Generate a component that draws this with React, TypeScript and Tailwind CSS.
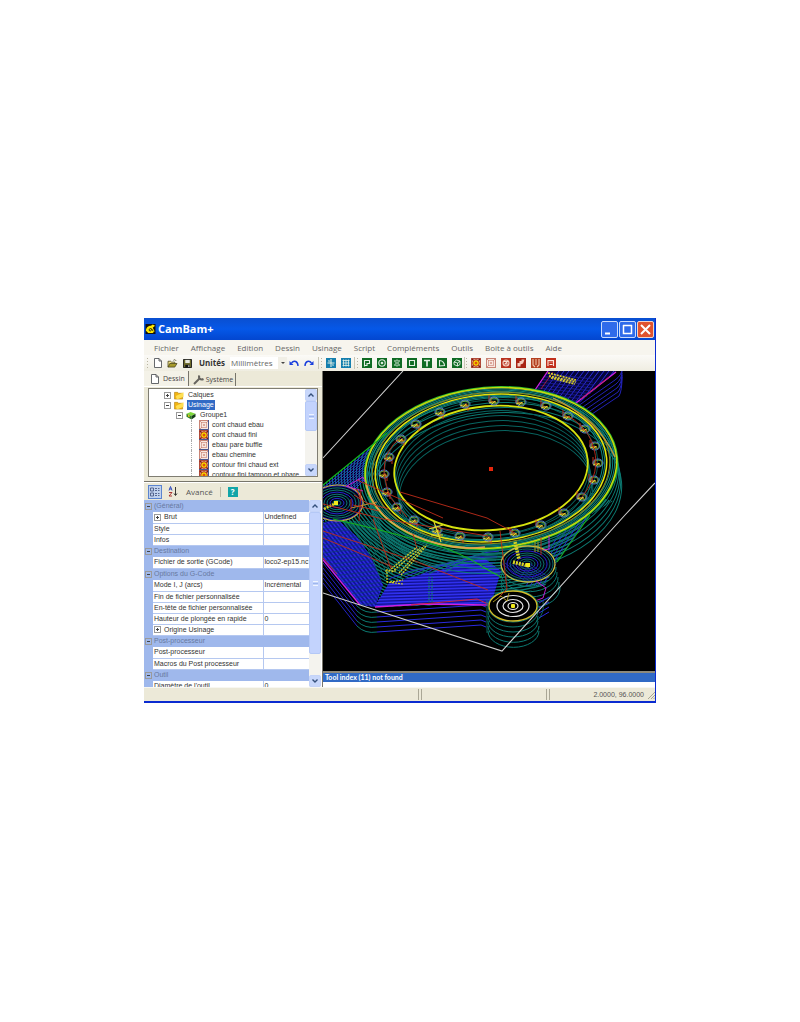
import { useState, type ReactNode } from 'react';

const menus = ['Fichier', 'Affichage', 'Edition', 'Dessin', 'Usinage', 'Script', 'Compléments', 'Outils', 'Boite à outils', 'Aide'];

const operations = [
  { label: 'cont chaud ebau', kind: 'pocket' },
  { label: 'cont chaud fini', kind: 'profile' },
  { label: 'ebau pare buffle', kind: 'pocket' },
  { label: 'ebau chemine', kind: 'pocket' },
  { label: 'contour fini chaud ext', kind: 'profile' },
  { label: 'contour fini tampon et phare', kind: 'profile' },
];

const sections = [
  {
    title: '(Général)',
    rows: [
      { name: 'Brut', value: 'Undefined', expandable: true },
      { name: 'Style', value: '' },
      { name: 'Infos', value: '' },
    ],
  },
  { title: 'Destination', rows: [{ name: 'Fichier de sortie (GCode)', value: 'loco2-ep15.nc' }] },
  {
    title: 'Options du G-Code',
    rows: [
      { name: 'Mode I, J (arcs)', value: 'Incrémental' },
      { name: 'Fin de fichier personnalisée', value: '' },
      { name: 'En-tête de fichier personnalisée', value: '' },
      { name: 'Hauteur de plongée en rapide', value: '0' },
      { name: 'Origine Usinage', value: '', expandable: true },
    ],
  },
  {
    title: 'Post-processeur',
    rows: [
      { name: 'Post-processeur', value: '' },
      { name: 'Macros du Post processeur', value: '' },
    ],
  },
  { title: 'Outil', rows: [{ name: "Diamètre de l'outil", value: '0' }] },
] as { title: string; rows: { name: string; value: string; expandable?: boolean }[] }[];

function ToolIcon({ label, color, children }: { label: string; color: string; children: ReactNode }) {
  return (
    <button aria-label={label} className="size-[10px] shrink-0">
      <svg viewBox="0 0 10 10" className="block size-full" fill="none" stroke="#e4f0e4" strokeWidth="1.1">
        <rect width="10" height="10" fill={color} stroke="none" />
        {children}
      </svg>
    </button>
  );
}

const drawTools = [
  { label: 'Polyligne', icon: <path d="M2.500 8.500V2.500H7.500V5.500H5V7.500H2.500" /> },
  { label: 'Cercle', icon: <><circle cx="5" cy="5" r="3.200" /><circle cx="5" cy="5" r=".8" /></> },
  { label: 'Points', icon: <path d="M2 3h2M6 3h2M3 5h4M2 7h2M6 7h2M5 1.500v2M5 6.500v2" /> },
  { label: 'Rectangle', icon: <path d="M2.500 2.500h5v5h-5z" /> },
  { label: 'Texte', icon: <path d="M2 2.500h6M5 2.500v6" strokeWidth="1.700" /> },
  { label: 'Arc', icon: <path d="M2.500 8V2.500C5.500 2.500 7.500 5 7.500 7.500z" /> },
  { label: 'Surface', icon: <path d="M2 4l2.500-2L8 3v3.500L5.500 8 2 6.500zM2 4l3.500 1L8 3M5.500 5v3" strokeWidth=".9" /> },
];

function TargetArt() {
  return (
    <>
      <rect x=".5" y=".5" width="9" height="9" fill="#e8c0ac" stroke="#b04a38" strokeWidth="1" />
      <path d="M1 1l2 2M9 1L7 3M1 9l2-2M9 9L7 7" stroke="#7b1610" strokeWidth="1.500" />
      <circle cx="5" cy="5" r="3.300" fill="#f6e000" stroke="#b3281b" strokeWidth="1" />
      <circle cx="5" cy="5" r="1.500" fill="#e0500c" />
    </>
  );
}

function PocketArt() {
  return (
    <>
      <rect x=".5" y=".5" width="9" height="9" fill="#f8e6de" stroke="#c98475" strokeWidth="1" />
      <rect x="2.500" y="2.500" width="5" height="5" fill="none" stroke="#dba99c" strokeWidth="1" />
      <path d="M4.500 4.500h1v1h-1zM1 1l2 2M9 1L7 3M1 9l2-2" fill="none" stroke="#c98373" strokeWidth=".8" />
    </>
  );
}

const camTools = [
  { label: 'Contour', color: '#b42a1a', icon: <g stroke="none"><TargetArt /></g> },
  { label: 'Poche', color: '#e3b6aa', icon: <g stroke="none"><PocketArt /></g> },
  { label: 'Perçage', color: '#b8321f', icon: <><circle cx="5" cy="5" r="3" stroke="#f3d0c2" /><path d="M3 3.500h3.500L4 6h3" stroke="#f6dccf" /></> },
  { label: 'Gravure', color: '#a82413', icon: <path d="M1.500 8.500V5h2V3h2V1.500h3L7 5.500 4.500 6.500v2z" fill="#f6cdbd" stroke="none" /> },
  { label: 'Tournage', color: '#b4401f', icon: <path d="M2 1v6l2 2M8 1v6L6 9M4 2h2M4 4h2M4 6h2" stroke="#f3c9b0" /> },
  { label: 'Profil 3D', color: '#c1301c', icon: <path d="M2 8V2.500h5.500V8M3.500 4h1M5.500 4h1M3.500 6.500h3" stroke="#ffe7dd" /> },
];

function Grip() {
  return (
    <svg viewBox="0 0 2 10" className="h-[10px] w-[2px] shrink-0" fill="#b9b5a2">
      <path d="M0 0h1v1H0zM0 3h1v1H0zM0 6h1v1H0zM0 9h1v1H0z" />
    </svg>
  );
}

function DocIcon() {
  return (
    <svg viewBox="0 0 8 10" className="h-[10px] w-[8px] shrink-0" fill="#fff" stroke="#55585c" strokeWidth=".9">
      <path d="M.5 .5h4.500l2.500 2.500v6.500H.5zM5 .5V3h2.500" />
    </svg>
  );
}

function FolderIcon() {
  return (
    <svg viewBox="0 0 11 10" className="h-[9px] w-[10px] shrink-0">
      <path d="M.5 1.500h3.500l1 1h4.500v6.500h-9z" fill="#f2b412" stroke="#a9780a" strokeWidth=".6" />
      <path d="M2 5.500L10.500 1.500v5L3 9.500z" fill="#ffdf52" />
    </svg>
  );
}

function CubeIcon() {
  return (
    <svg viewBox="0 0 11 10" className="h-[9px] w-[10px] shrink-0">
      <path d="M.5 3L5 1l5.500 2L6 5.500z" fill="#7ed93a" />
      <path d="M.5 3L6 5.500V9.500L.5 6.500z" fill="#2a7d1f" />
      <path d="M6 5.500L10.500 3v3.500L6 9.500z" fill="#143f14" />
      <path d="M2 4l2 1v2L2 6z" fill="#e7c51f" />
    </svg>
  );
}

function Toggle({ open }: { open?: boolean }) {
  return (
    <svg viewBox="0 0 7 7" className="size-[7px] shrink-0" fill="none" stroke="#9a9a9a" strokeWidth="1">
      <rect x=".5" y=".5" width="6" height="6" />
      <path d={open ? 'M2 3.500h3' : 'M2 3.500h3M3.500 2v3'} stroke="#444" />
    </svg>
  );
}

function Scrollbar({ thumb }: { thumb: string }) {
  return (
    <div className="flex w-[12px] shrink-0 flex-col bg-[#f4f3ee]">
      <button aria-label="Défiler vers le haut" className="flex h-[12px] items-center justify-center rounded-[2px] border border-[#c4d3f8] bg-[#c8d7fb]">
        <svg viewBox="0 0 6 4" className="h-[4px] w-[6px]" fill="none" stroke="#35507c" strokeWidth="1.400"><path d="M.5 3.500L3 1l2.500 2.500" /></svg>
      </button>
      <div className="flex min-h-0 flex-1 flex-col">
        <div className={`flex flex-col items-center justify-center gap-px rounded-[2px] border border-[#b4c8f6] bg-[#c3d3fd] ${thumb}`}>
          <i className="h-px w-[5px] bg-[#eef4fe]" />
          <i className="h-px w-[5px] bg-[#9fb8ec]" />
          <i className="h-px w-[5px] bg-[#eef4fe]" />
        </div>
      </div>
      <button aria-label="Défiler vers le bas" className="flex h-[12px] items-center justify-center rounded-[2px] border border-[#c4d3f8] bg-[#c8d7fb]">
        <svg viewBox="0 0 6 4" className="h-[4px] w-[6px]" fill="none" stroke="#35507c" strokeWidth="1.400"><path d="M.5 .5L3 3 5.500 .5" /></svg>
      </button>
    </div>
  );
}

function TitleBar() {
  return (
    <header className="flex h-[22px] items-center gap-[2px] bg-linear-to-b from-[#0a4fd0] via-[#0558e8] to-[#0346cf] px-px">
      <svg viewBox="0 0 11 11" className="h-[10px] w-[11px]">
        <rect width="11" height="11" fill="#111" />
        <path d="M.5 7.500C.5 4 3 2 6 2l2-1.500L10.500 2 8 4l2 4-2 2H3z" fill="#ffea00" />
        <path d="M4 6.500c0-2 3-2 2.500 0S4 8 4 6.500M6.500 5l2 3" fill="none" stroke="#111" strokeWidth=".9" />
      </svg>
      <h1 className="flex-1 font-['Open_Sans',sans-serif] text-[11px] leading-[20px] font-bold text-white">CamBam+</h1>
      <div className="flex gap-[1px]">
        <button aria-label="Réduire" className="size-[17px] rounded-[2px] border border-[#c9dafb] bg-[#2f6bea]">
          <svg viewBox="0 0 15 15"><path d="M3 11.500h5" stroke="#fff" strokeWidth="2" /></svg>
        </button>
        <button aria-label="Agrandir" className="size-[17px] rounded-[2px] border border-[#c9dafb] bg-[#2f6bea]">
          <svg viewBox="0 0 15 15"><path d="M3 3.500h9M3.500 3v8.500h8V3" fill="none" stroke="#fff" strokeWidth="1.500" /></svg>
        </button>
        <button aria-label="Fermer" className="size-[17px] rounded-[2px] border border-[#f3d3ca] bg-[#e0532f]">
          <svg viewBox="0 0 15 15"><path d="M3 3l9 9M12 3l-9 9" stroke="#fff" strokeWidth="2" /></svg>
        </button>
      </div>
    </header>
  );
}

function Toolbar() {
  return (
    <div className="flex h-[16px] items-center bg-linear-to-b from-[#fbfaf7] to-[#efede1] pl-[3px]">
      <Grip />
      <div className="ml-[5px] flex items-center gap-[5px]">
        <button aria-label="Nouveau"><DocIcon /></button>
        <button aria-label="Ouvrir">
          <svg viewBox="0 0 11 10" className="h-[9px] w-[11px]" stroke="#3e3a12" strokeWidth=".8">
            <path d="M.5 9V2.500h3l1 1h3.500V5" fill="#f1e08a" />
            <path d="M.5 9l2-4h8L8 9z" fill="#a69a2c" />
            <path d="M6.500 1.500c1-1 2-1 3 .5" fill="none" />
          </svg>
        </button>
        <button aria-label="Enregistrer">
          <svg viewBox="0 0 10 10" className="size-[9px]">
            <path d="M.5 .5h9v9h-9z" fill="#6d6a2b" stroke="#151515" />
            <path d="M2.500 1h5v3.500h-5z" fill="#e9e9e0" />
            <path d="M2.500 6.500h5v3h-5z" fill="#151515" />
            <path d="M6 7h1v2H6z" fill="#fff" />
          </svg>
        </button>
      </div>
      <label htmlFor="units" className="ml-[7px] w-[28px] font-['Open_Sans',sans-serif] text-[8px] leading-[10px] font-bold text-[#333]">Unités</label>
      <div className="ml-[3px] flex w-[57px] items-center bg-white">
        <select id="units" className="h-[12px] w-full min-w-0 appearance-none bg-transparent pl-px font-['Open_Sans',sans-serif] text-[8px] leading-[10px] text-[#666]">
          <option>Millimètres</option>
        </select>
        <span className="flex h-[12px] w-[9px] shrink-0 items-center justify-center bg-[#f1efe6]">
          <svg viewBox="0 0 4 2" className="h-[2px] w-[4px]"><path d="M0 0h4L2 2z" fill="#444" /></svg>
        </span>
      </div>
      <div className="ml-[2px] flex gap-[5px]">
        <button aria-label="Annuler">
          <svg viewBox="0 0 10 10" className="size-[10px]" fill="none" stroke="#1a3fdc" strokeWidth="1.400">
            <path d="M9 8C9 3.500 5 1.500 2.500 5" /><path d="M.5 3v4h4z" fill="#1a3fdc" stroke="none" />
          </svg>
        </button>
        <button aria-label="Rétablir">
          <svg viewBox="0 0 10 10" className="size-[10px]" fill="none" stroke="#1a3fdc" strokeWidth="1.400">
            <path d="M1 8C1 3.500 5 1.500 7.500 5" /><path d="M9.500 3v4h-4z" fill="#1a3fdc" stroke="none" />
          </svg>
        </button>
      </div>
      <i className="mr-[2px] ml-[4px] h-[12px] w-px bg-[#c9c6b6]" />
      <Grip />
      <div className="ml-[3px] flex gap-[5px]">
        <ToolIcon label="Aimanter à la grille" color="#157fae"><path d="M5 1v8M1.500 5h7M2.500 2.500l1 1M6.500 6.500l1 1" /></ToolIcon>
        <ToolIcon label="Afficher la grille" color="#157fae"><path d="M1.500 2.500h7M1.500 5h7M1.500 7.500h7M2.500 1.500v7M5 1.500v7M7.500 1.500v7" strokeWidth=".8" /></ToolIcon>
      </div>
      <i className="mr-[2px] ml-[3px] h-[12px] w-px bg-[#c9c6b6]" />
      <Grip />
      <div className="ml-[3px] flex gap-[5px]">
        {drawTools.map((tool) => (
          <ToolIcon key={tool.label} label={tool.label} color="#0f6b23">{tool.icon}</ToolIcon>
        ))}
      </div>
      <i className="mr-px ml-[2px] h-[12px] w-px bg-[#c9c6b6]" />
      <Grip />
      <div className="ml-[3px] flex gap-[5px]">
        {camTools.map((tool) => (
          <ToolIcon key={tool.label} label={tool.label} color={tool.color}>{tool.icon}</ToolIcon>
        ))}
      </div>
    </div>
  );
}

function TreePanel() {
  const [selected, setSelected] = useState('Usinage');
  const name = (label: string) => (
    <button
      onClick={() => setSelected(label)}
      className={`h-[10px] px-px whitespace-nowrap ${selected === label ? 'bg-[#316ac5] text-white' : ''}`}
    >
      {label}
    </button>
  );

  return (
    <div className="mx-[4px] flex h-[89px] border border-[#7f7d72] bg-white">
      <ul className="min-w-0 flex-1 overflow-hidden pt-px text-[7px] leading-[10px] text-[#333]">
        <li className="flex h-[10px] items-center gap-[3px] pl-[15px]"><Toggle /><FolderIcon />{name('Calques')}</li>
        <li className="flex h-[10px] items-center gap-[3px] pl-[15px]"><Toggle open /><FolderIcon />{name('Usinage')}</li>
        <li className="flex h-[10px] items-center gap-[3px] pl-[27px]"><Toggle open /><CubeIcon />{name('Groupe1')}</li>
        {operations.map((op) => (
          <li key={op.label} className="flex h-[10px] items-center gap-[2px] pl-[42px]">
            <i className="h-full w-[6px] shrink-0 border-l border-dotted border-[#aaa]" />
            <svg viewBox="0 0 10 10" className="size-[10px] shrink-0">
              {op.kind === 'profile' ? <TargetArt /> : <PocketArt />}
              <path d="M9.500 0v9.500H0" fill="none" stroke="#4a568c" strokeWidth="1" />
            </svg>
            {name(op.label)}
          </li>
        ))}
      </ul>
      <Scrollbar thumb="h-[30px]" />
    </div>
  );
}

function PropertyGrid() {
  return (
    <div className="flex h-[187px] min-h-0 bg-white pr-px">
      <div className="min-w-0 flex-1 overflow-hidden">
        <table className="w-full table-fixed border-collapse text-[7px] leading-[10px] text-[#333]">
          <colgroup>
            <col className="w-[9px]" />
            <col className="w-[110px]" />
            <col />
          </colgroup>
          {sections.map((section) => (
            <tbody key={section.title}>
              <tr className="h-[12px] bg-[#9fb8ec] text-[#68799f]">
                <td className="p-0 pl-px"><Toggle open /></td>
                <th colSpan={2} className="p-0 pl-px text-left font-normal">{section.title}</th>
              </tr>
              {section.rows.map((row) => (
                <tr key={row.name} className="h-[11px]">
                  <td className="bg-[#9fb8ec] p-0" />
                  <th className="border-r border-b border-[#b5c8f0] p-0 text-left font-normal">
                    <span className="flex h-[10px] items-center gap-[3px] overflow-hidden pl-px whitespace-nowrap">
                      {row.expandable && <Toggle />}
                      {row.name}
                    </span>
                  </th>
                  <td className="overflow-hidden border-b border-[#b5c8f0] p-0 pl-px whitespace-nowrap">{row.value}</td>
                </tr>
              ))}
            </tbody>
          ))}
        </table>
      </div>
      <Scrollbar thumb="h-[142px]" />
    </div>
  );
}

function Sidebar() {
  return (
    <aside className="flex w-[178px] shrink-0 flex-col bg-[#ece9d8]">
      <div role="tablist" className="flex h-[15px] items-end font-['Open_Sans',sans-serif] text-[7px] leading-[10px] text-[#444]">
        <button role="tab" aria-selected="true" className="flex h-[15px] items-center gap-[4px] border-r border-[#77756b] bg-[#f4f2e8] pr-[3px] pl-[7px]">
          <DocIcon />Dessin
        </button>
        <button role="tab" aria-selected="false" className="flex h-[13px] items-center gap-[2px] border-r border-[#77756b] pr-[2px] pl-[4px]">
          <svg viewBox="0 0 11 10" className="h-[10px] w-[11px]" fill="none" stroke="#66645f" strokeWidth="2">
            <path d="M1 9l5.500-5.500" /><path d="M6.500 .5C5 3 7.500 5.500 10.500 4" />
          </svg>
          Système
        </button>
      </div>
      <div className="border-y border-t-[#fff] border-b-[#77756b] pt-px pb-[4px]">
        <TreePanel />
      </div>
      <div className="flex h-[18px] items-center border-t border-white pl-[4px] font-['Open_Sans',sans-serif] text-[8px] leading-[10px] text-[#555]">
        <button aria-label="Par catégorie" className="flex size-[14px] items-center justify-center border border-[#5b84cf] bg-[#c1d2ee]">
          <svg viewBox="0 0 10 10" className="size-[10px]" fill="none" stroke="#3d4d78" strokeWidth=".8">
            <path d="M.5 1h3v3h-3zM.5 6h3v3h-3zM5 1.500h2M8 1.500h1.500M5 3.500h2M8 3.500h1.500M5 6.500h2M8 6.500h1.500M5 8.500h2M8 8.500h1.500" />
          </svg>
        </button>
        <button aria-label="Par ordre alphabétique" className="ml-[6px]">
          <svg viewBox="0 0 10 11" className="h-[11px] w-[10px]" fill="none" strokeWidth=".9">
            <path d="M1 4.500L2.500 .5 4 4.500M1.500 3h2" stroke="#2340bd" />
            <path d="M1 6.500h3L1 10h3" stroke="#a32323" />
            <path d="M7.500 1v8M6 7.500L7.500 9.500 9 7.500" stroke="#222" />
          </svg>
        </button>
        <button className="ml-[8px]">Avancé</button>
        <i className="mx-[7px] h-[10px] w-px bg-[#bdb9a6]" />
        <button aria-label="Aide" className="flex size-[10px] items-center justify-center bg-[#12a5a8] text-[8px] font-bold text-white">?</button>
      </div>
      <PropertyGrid />
    </aside>
  );
}

const TEAL = '#0c7a72';
const BLUE = '#2a2ae0';
const LEVELS = [1, 2, 3, 4, 5];

const holes = [
  [171, 30], [198, 31], [223, 35], [245, 45], [262, 58], [272, 75], [275, 92], [271, 109],
  [259, 126], [241, 142], [218, 154], [192, 162], [165, 166], [137, 165], [114, 159], [91, 149],
  [74, 136], [64, 121], [61, 103], [66, 86], [78, 68], [93, 53], [117, 41], [142, 33],
];

function range(n: number) {
  return Array.from({ length: n }, (_, i) => i);
}

function Ring({ rx, ry, color, width = 1, level = 0 }: { rx: number; ry: number; color: string; width?: number; level?: number }) {
  return (
    <ellipse
      cx="0" cy="0" rx={rx} ry={ry} fill="none" stroke={color} strokeWidth={width}
      transform={`translate(${168 + level} ${97 + level * 5}) rotate(-5)`}
    />
  );
}

function Viewport() {
  return (
    <svg viewBox="0 0 332 300" preserveAspectRatio="xMidYMid slice" className="block h-[300px] w-full bg-black" fill="none" role="img" aria-label="Parcours d'outil">
      <defs>
        <clipPath id="plate">
          <path d="M0 114L64 62 168 97 290 130 267 144 234 191 222 215 200 222 175 222 165 233 52 236 37 234 0 189z" />
        </clipPath>
        <clipPath id="blueLeft">
          <path d="M0 152L14 148 34 166 48 186 60 214 52 236 37 234 0 189z" />
        </clipPath>
        <clipPath id="blueRight">
          <path d="M52 235L66 212 104 202 128 196 160 186 178 200 168 233z" />
        </clipPath>
        <clipPath id="boss">
          <path d="M225 0H294L254 34 212 19z" />
        </clipPath>
        <clipPath id="hubInner"><ellipse cx="205" cy="193" rx="27" ry="18" /></clipPath>
      </defs>

      {/* plate: contours that follow the ring outwards */}
      <g clipPath="url(#plate)">
        {range(26).map((i) => (
          <Ring key={i} rx={129 + i * 3} ry={83 + i * 3} color={TEAL} width={1.3} />
        ))}
        {range(12).map((i) => (
          <path key={i} d={`M0 ${117 + i * 3}L${62 - i} ${66 + i * 3}`} stroke={BLUE} />
        ))}
        {range(16).map((i) => (
          <path key={i} d={`M${18 + i * 2} 150Q${40 + i * 2} ${160 + i} ${54 + i * 4} ${212 - i * 2}`} stroke={TEAL} strokeWidth=".8" />
        ))}
        {range(9).map((i) => (
          <path key={i} d={`M${203 + i * 4} 215L${250 + i * 4} 142`} stroke={BLUE} strokeWidth=".9" />
        ))}
      </g>
      <g clipPath="url(#blueLeft)">
        <path d="M0 140H70V240H0z" fill="#121296" />
        {range(34).map((i) => (
          <path key={i} d={`M${-60 + i * 4} 140L${20 + i * 4} 240`} stroke={BLUE} strokeWidth="1.500" />
        ))}
        {range(24).map((i) => (
          <path key={i} d={`M0 ${150 + i * 4}L70 ${142 + i * 4}`} stroke="#0d3f70" strokeWidth=".7" />
        ))}
      </g>
      <g clipPath="url(#blueRight)">
        <path d="M50 185H180V240H50z" fill="#10108c" />
        {range(16).map((i) => (
          <path key={i} d={`M50 ${190 + i * 3}L180 ${186 + i * 3}`} stroke="#3030ee" strokeWidth="1.700" />
        ))}
        <path d="M106 206v28M109 206v28" stroke={TEAL} strokeWidth="1.500" strokeDasharray="1 1" />
      </g>
      {range(8).map((i) => (
        <path key={i} d={`M${66 + i * 8} ${208 - i}Q${112 + i * 6} ${187 - i} ${170 + i} ${198 - i * 3}`} stroke={i % 2 ? TEAL : BLUE} strokeWidth=".9" />
      ))}

      {/* lower depth passes of the plate edge */}
      {LEVELS.map((n) => (
        <g key={n} transform={`translate(0 ${n * 5})`}>
          <path d="M0 187L34 230" stroke="#2222c4" />
          <path d="M34 230Q42 238 54 236" stroke={TEAL} />
          <path d="M54 236L158 229 163 231" stroke={BLUE} />
        </g>
      ))}
      <path d="M0 189L37 234M52 236L100 233 165 234" stroke="#d01fe0" strokeWidth="1.300" />
      <path d="M0 187L14 203M88 234L154 228 165 233" stroke="#c92340" />

      {/* upper boss */}
      <g clipPath="url(#boss)">
        <path d="M212 0H294V34H212z" fill="#060638" />
        {range(20).map((i) => (
          <path key={i} d={`M${206 + i * 5} 40L${236 + i * 5} 0`} stroke={BLUE} />
        ))}
        {range(12).map((i) => (
          <path key={i} d={`M215 ${2 + i * 3}L270 ${8 + i * 3}`} stroke="#1d1d9b" strokeWidth=".8" />
        ))}
      </g>
      {LEVELS.map((n) => (
        <path key={n} d={`M${253 + n * 2} ${32 + n * 3}L${291 + n} ${5 + n * 4}Q299 ${n * 4} 299 ${n * 2 - 4}`} stroke="#2222b8" />
      ))}
      <path d="M212 19L225 0M253 32L293 1" stroke="#d01fe0" strokeWidth="1.300" />
      <path d="M218 18L230 1M258 28L286 6" stroke="#c92340" strokeWidth=".8" />
      <path d="M225 2L253 9M226 5L253 11M228 7L252 13" stroke="#d6cb2a" strokeWidth="1.800" strokeDasharray="2 1" />

      {/* ring */}
      <ellipse cx="168" cy="97" rx="126" ry="80" fill="#000" transform="rotate(-5 168 97)" />
      {LEVELS.map((n) => (
        <Ring key={n} rx={126} ry={80} color={TEAL} level={n} />
      ))}
      {[124, 122, 120, 114, 112].map((rx) => (
        <Ring key={rx} rx={rx} ry={rx * 0.635} color="#0d857c" />
      ))}
      {LEVELS.map((n) => (
        <Ring key={n} rx={97} ry={62} color="#086460" level={n} />
      ))}
      <Ring rx={107} ry={68} color={TEAL} width={0.7} />
      <Ring rx={127} ry={81} color="#22b830" width={1.2} />
      <Ring rx={126} ry={80} color="#c3dc10" width={1.6} />
      <Ring rx={119} ry={75.5} color="#8d8b21" />
      <Ring rx={116} ry={73.5} color="#e2e410" width={1.6} />
      <Ring rx={97} ry={62} color="#d6e20f" width={1.8} />
      <path d="M43 112Q50 145 88 163T162 176" stroke="#e0a055" strokeWidth="1.600" />
      <path d="M230 27Q275 48 292 86" stroke="#cf9838" strokeWidth="1.200" />

      {/* holes and their lead-ins */}
      {holes.map(([x, y], i) => (
        <g key={i} transform={`translate(${x} ${y})`}>
          <path d={i < 12 ? 'M-5 -6V1H2M-3 -4V2' : 'M3 7V1L-4 3M1 5V-1'} stroke="#d5361e" strokeWidth=".9" />
          <ellipse rx="5" ry="4" stroke="#5878d0" />
          <ellipse rx="4" ry="3" stroke="#7cc044" strokeWidth=".8" />
          <path d="M-5 2L-2 1H2M-2 3L1 0" stroke="#e4dc2c" strokeWidth=".9" />
        </g>
      ))}
      <path d="M245 45Q272 60 273 92 272 110 259 126M61 103Q60 80 78 66M61 103L66 125 84 146" stroke="#b82a1a" strokeWidth=".9" />

      {/* left hub */}
      <ellipse cx="14" cy="132" rx="26" ry="18" fill="#020218" />
      {range(8).map((i) => (
        <ellipse key={i} cx="14" cy="132" rx={4 + i * 3} ry={2.5 + i * 2.1} stroke={i % 3 === 1 ? BLUE : '#0d857c'} strokeWidth=".9" />
      ))}
      <ellipse cx="14" cy="132" rx="26" ry="18" stroke="#c9a84c" strokeWidth="1.200" />
      <path d="M1 138L13 132" stroke="#d9d420" strokeWidth="2.600" strokeDasharray="2 1" />
      <rect x="11" y="130" width="4" height="4" fill="#f2ea1d" />
      <path d="M24 115L40 106 42 111M23 115L40 120" stroke="#d01fe0" strokeWidth=".9" />
      <path d="M28 137L54 131" stroke="#c98a30" />
      <path d="M28 128V140M31 124L44 132 66 138M30 134L56 140M34 118L38 130" stroke="#c5321c" strokeWidth=".9" />

      {/* right hubs */}
      {LEVELS.map((n) => (
        <path key={n} d={`M178 ${193 + n * 5}A27 18 0 0 0 ${232 + n} ${191 + n * 5}`} stroke={TEAL} />
      ))}
      <ellipse cx="205" cy="193" rx="27" ry="18" fill="#020212" />
      <g clipPath="url(#hubInner)">
        {range(8).map((i) => (
          <ellipse key={i} cx="204" cy="193" rx={5 + i * 3} ry={3 + i * 2} stroke={i % 3 === 2 ? BLUE : TEAL} strokeWidth=".9" />
        ))}
        {range(8).map((i) => (
          <path key={i} d={`M${178 + i * 4} 192L${205 + i * 4} 212`} stroke="#2222b8" strokeWidth=".8" />
        ))}
      </g>
      <ellipse cx="205" cy="193" rx="27" ry="18" stroke="#c4bb44" strokeWidth="1.300" />
      <path d="M213 210L223 217 220 227 212 230M226 165V178L220 179" stroke="#d01fe0" strokeWidth=".9" />
      {range(4).map((i) => (
        <path key={i} d={`M216 ${232 + i * 5}L226 ${226 + i * 5}`} stroke={BLUE} />
      ))}
      <path d="M166 232V260Q171 276 190 276 212 274 214 258V232z" fill="#000" />
      {LEVELS.map((n) => (
        <path key={n} d={`M165 ${235 + n * 5}A25 16 0 0 0 ${215 + (n > 3 ? 1 : 0)} ${235 + n * 5}`} stroke={TEAL} />
      ))}
      <path d="M164 228V262M220 230Q222 242 214 250" stroke={TEAL} strokeWidth=".8" />
      <ellipse cx="190" cy="235" rx="24" ry="15" fill="#000" />
      <ellipse cx="190" cy="235" rx="25" ry="16" stroke={TEAL} />
      <ellipse cx="190" cy="235" rx="24" ry="15" stroke="#d3bd2a" strokeWidth="1.300" />
      {[[16, 10.5], [10, 6.5], [5, 3.5]].map(([rx, ry]) => (
        <ellipse key={rx} cx="190" cy="235" rx={rx} ry={ry} stroke="#e6e6e6" strokeWidth="1.200" />
      ))}
      <rect x="188" y="233" width="4" height="4" rx="1" fill="#f2ea1d" />

      {/* rapids */}
      <path d="M0 114L64 62M10 148Q55 158 90 168 130 176 165 199L178 206M267 144L234 191" stroke="#15b31c" strokeWidth="1.100" />
      <path d="M77 121L164 147 192 162M34 109L120 147M0 133L60 148 165 165M0 160L92 190 165 219M0 167L70 196M50 148L68 198M90 163L94 178M177 160L184 218 176 226M218 166V184M38 118L36 150" stroke="#c02c1a" strokeWidth=".9" />
      <path d="M66 200L94 176M69 201L97 177M78 204L104 174M76 202L101 175" stroke="#cfc62a" strokeWidth="1.400" strokeDasharray="2 1" />
      <path d="M62 200H74M64 198V211L80 213M67 211L80 209" stroke="#d9d420" strokeWidth="1.200" strokeDasharray="2 1" />
      <path d="M111 151L118 171M106 158L120 154M108 164H120" stroke="#e4dc2c" strokeWidth="1.200" />
      <path d="M192 171L196 188M190 191L206 195" stroke="#d9d420" strokeWidth="3.500" strokeDasharray="2 1" />
      <rect x="203" y="192" width="4" height="4" fill="#f2ea1d" />
      <path d="M170 231L178 225 184 230 186 222M212 171V181M215 171V181" stroke="#b5a322" strokeWidth=".9" />

      {/* stock outline and origin */}
      <path d="M0 87L80 0M0 222L179 280 302 144 332 112" stroke="#cfcfcf" strokeWidth="1.100" />
      <rect x="166" y="96" width="4" height="4" fill="#e5260c" />
    </svg>
  );
}

export default function App() {
  return (
    <div className="flex min-h-screen items-center bg-white px-36 pb-px font-['Liberation_Sans',sans-serif]">
      <main className="w-full overflow-hidden border-r border-b-2 border-[#0a2bd0] bg-[#ece9d8]">
        <TitleBar />
        <nav className="flex h-[15px] items-center gap-[12px] bg-[#f7f5ee] pl-[10px] font-['Open_Sans',sans-serif] text-[8px] leading-[10px] text-[#666]">
          {menus.map((menu) => (
            <button key={menu} className="whitespace-nowrap">{menu}</button>
          ))}
        </nav>
        <Toolbar />
        <div className="flex">
          <Sidebar />
          <section className="flex min-w-0 flex-1 flex-col border-l border-[#77756b]">
            <Viewport />
            <div className="flex-1 border-t-2 border-[#8d897b] bg-white">
              <p className="bg-[#316ac5] pl-[2px] font-['Lato',sans-serif] text-[7px] leading-[9px] font-bold text-white">Tool index (11) not found</p>
            </div>
          </section>
        </div>
        <footer className="flex h-[14px] items-center gap-[2px] border-t border-[#f8f7f1] text-[7px] leading-[10px] text-[#555]">
          <span className="h-[11px] w-[275px] border-r border-[#aaa796]" />
          <span className="h-[11px] flex-1 border-r border-l border-[#aaa796]" />
          <span className="flex h-[11px] w-[106px] items-center justify-end gap-[3px] border-l border-[#aaa796]">
            2.0000, 96.0000
            <svg viewBox="0 0 8 8" className="size-[8px]" stroke="#a9a693" strokeWidth="1"><path d="M1 8L8 1M4 8L8 4M6.500 8L8 6.500" /></svg>
          </span>
        </footer>
      </main>
    </div>
  );
}
